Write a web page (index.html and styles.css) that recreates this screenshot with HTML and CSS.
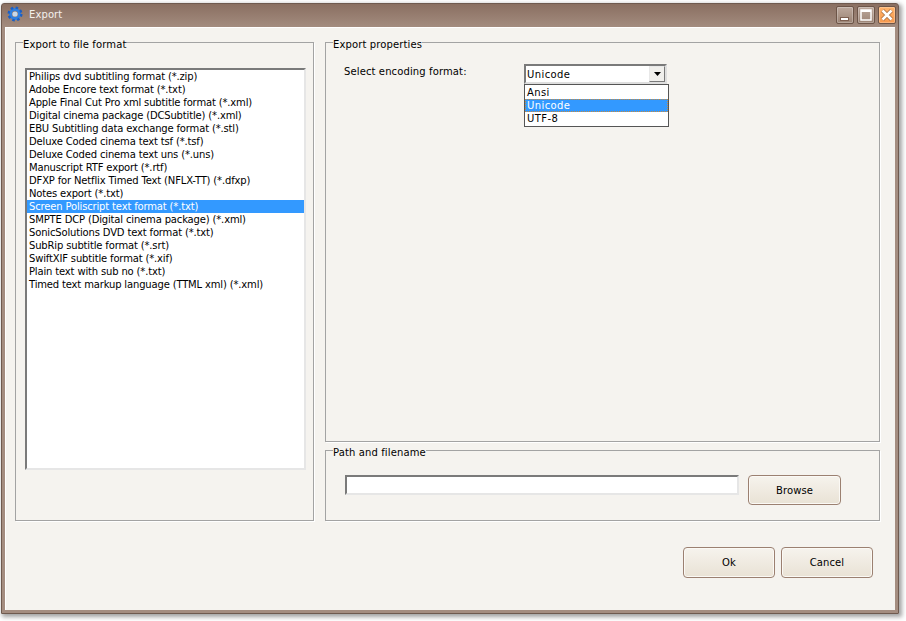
FILE: index.html
```html
<!DOCTYPE html>
<html lang="en">
<head>
<meta charset="utf-8">
<title>Export</title>
<link rel="stylesheet" href="styles.css">
</head>
<body>
<div class="window">
  <header class="titlebar">
    <svg class="app-icon" viewBox="0 0 16 16" width="16" height="16">
      <circle cx="8" cy="8" r="4.6" fill="none" stroke="#2f7fe0" stroke-width="3"/>
      <circle cx="8" cy="8" r="6.4" fill="none" stroke="#1b5fc4" stroke-width="2.2" stroke-dasharray="2.6 2.4"/>
      <circle cx="8" cy="8" r="2.6" fill="#c7d8ea"/>
    </svg>
    <span class="title">Export</span>
    <div class="caption-buttons">
      <button class="cap">
        <svg viewBox="0 0 18 18" width="18" height="18"><rect x="4.500" y="11.500" width="8" height="3" fill="#fff" stroke="#7d5f50"/></svg>
      </button>
      <button class="cap">
        <svg viewBox="0 0 18 18" width="18" height="18"><rect x="4" y="4" width="10" height="10" fill="none" stroke="#fff" stroke-width="1.500"/><rect x="4" y="4" width="10" height="2" fill="#fff"/></svg>
      </button>
      <button class="cap cap-close">
        <svg viewBox="0 0 18 18" width="18" height="18"><path d="M4.500 4.500 13.500 13.500M13.500 4.500 4.500 13.500" fill="none" stroke="#a2673a" stroke-width="4"/><path d="M4.500 4.500 13.500 13.500M13.500 4.500 4.500 13.500" fill="none" stroke="#fff" stroke-width="2.600"/></svg>
      </button>
    </div>
  </header>
  <main class="content">
    <div class="groups">
      <fieldset class="group group-format">
        <legend>Export to file format</legend>
        <ul class="listbox">
          <li>Philips dvd subtitling format (*.zip)</li>
          <li>Adobe Encore text format (*.txt)</li>
          <li>Apple Final Cut Pro xml subtitle format (*.xml)</li>
          <li>Digital cinema package (DCSubtitle) (*.xml)</li>
          <li>EBU Subtitling data exchange format (*.stl)</li>
          <li>Deluxe Coded cinema text tsf (*.tsf)</li>
          <li>Deluxe Coded cinema text uns (*.uns)</li>
          <li>Manuscript RTF export (*.rtf)</li>
          <li>DFXP for Netflix Timed Text (NFLX-TT) (*.dfxp)</li>
          <li>Notes export (*.txt)</li>
          <li class="selected">Screen Poliscript text format (*.txt)</li>
          <li>SMPTE DCP (Digital cinema package) (*.xml)</li>
          <li>SonicSolutions DVD text format (*.txt)</li>
          <li>SubRip subtitle format (*.srt)</li>
          <li>SwiftXIF subtitle format (*.xif)</li>
          <li>Plain text with sub no (*.txt)</li>
          <li>Timed text markup language (TTML xml) (*.xml)</li>
        </ul>
      </fieldset>
      <fieldset class="group group-props">
        <legend>Export properties</legend>
        <div class="encoding-row">
          <span class="encoding-label">Select encoding format:</span>
          <div class="combo">
            <div class="combo-field">
              <span>Unicode</span>
              <span class="combo-arrow"><svg viewBox="0 0 7 4" width="7" height="4"><path d="M0 0h7L3.500 4z" fill="#000"/></svg></span>
            </div>
            <ul class="combo-popup">
              <li>Ansi</li>
              <li class="selected focused">Unicode</li>
              <li>UTF-8</li>
            </ul>
          </div>
        </div>
      </fieldset>
      <fieldset class="group group-path">
        <legend>Path and filename</legend>
        <div class="path-row">
          <div class="path-input"></div>
          <button class="btn btn-browse">Browse</button>
        </div>
      </fieldset>
    </div>
    <footer class="actions">
      <button class="btn btn-action">Ok</button>
      <button class="btn btn-action">Cancel</button>
    </footer>
  </main>
</div>
</body>
</html>
```
FILE: styles.css
```css
* { box-sizing: border-box; }
html, body { margin: 0; padding: 0; }
body {
  width: 906px;
  height: 621px;
  background: #fff;
  font-family: "DejaVu Sans", "Open Sans", sans-serif;
  font-size: 10px;
  letter-spacing: -0.16px;
  color: #000;
  overflow: hidden;
}
.window {
  margin: 3px 0 0 1px;
  width: 898px;
  height: 611px;
  display: flex;
  flex-direction: column;
  background: linear-gradient(180deg, #8a6f61 0, #a48d80 24px, #a48d80 100%);
  border: 1px solid #6f5a4f;
  border-radius: 3px 3px 0 0;
  box-shadow: 2px 2px 4px 1px rgba(90, 90, 90, .55);
}
.titlebar {
  height: 23px;
  flex: none;
  display: flex;
  align-items: center;
  padding: 0 2px 3px 5px;
}
.app-icon { flex: none; margin-right: 6px; }
.title { color: #f4f0ec; letter-spacing: 0.1px; }
.caption-buttons { margin-left: auto; margin-top: 2px; display: flex; gap: 3px; }
.cap {
  width: 18px;
  height: 18px;
  padding: 0;
  display: block;
  border: 1px solid #6d5548;
  border-radius: 2px;
  background: linear-gradient(180deg, #bda99d, #9b8374);
  box-shadow: inset 0 0 0 1px rgba(255, 255, 255, .25);
}
.cap svg { display: block; margin: -1px; }
.cap-close { background: linear-gradient(180deg, #ffb36b, #f79a4e); }
.content {
  flex: 1;
  margin: 0 3px 3px;
  background: #f5f3ef;
  border: 1px solid #fff;
  border-width: 1px 0 0 1px;
  display: flex;
  flex-direction: column;
  padding: 6px 13px 0 9px;
}
.groups {
  display: grid;
  grid-template-columns: 299px 555px;
  grid-template-rows: 408px 79px;
  column-gap: 11px;
}
.group {
  margin: 0;
  padding: 0;
  min-width: 0;
  border: 1px solid #a3a3a3;
  box-shadow: 1px 1px 0 #fff;
}
.group legend {
  margin-left: 7px;
  padding: 4px 0 0;
  line-height: 13px;
  letter-spacing: 0.12px;
}
.group-format { grid-row: 1 / span 2; }
.listbox {
  list-style: none;
  margin: 17px 7px 0 9px;
  padding: 0;
  height: 402px;
  background: #fff;
  border: 2px solid;
  border-color: #7a7a7a #e6e6e6 #e6e6e6 #7a7a7a;
  line-height: 13px;
}
.listbox li { padding-left: 2px; height: 13px; white-space: nowrap; }
.selected { background: #3399ff; color: #fff; }
.focused { outline: 1px dotted #c98a3c; outline-offset: -1px; }
.encoding-row { display: flex; align-items: flex-start; margin: 13px 0 0 18px; }
.encoding-label { width: 180px; margin-top: 1px; line-height: 13px; letter-spacing: 0.12px; }
.combo { position: relative; width: 143px; height: 20px; letter-spacing: 0.4px; }
.combo-field {
  height: 20px;
  background: #fff;
  border: 2px solid;
  border-color: #7a7a7a #dedede #dedede #7a7a7a;
  display: flex;
  align-items: center;
  justify-content: space-between;
  padding-left: 1px;
}
.combo-arrow {
  width: 16px;
  height: 16px;
  background: #f0efec;
  border: 1px solid;
  border-color: #e8e8e8 #7a7a7a #7a7a7a #e8e8e8;
  display: flex;
  align-items: center;
  justify-content: center;
}
.combo-arrow svg { display: block; }
.combo-popup {
  position: absolute;
  left: 0;
  top: 20px;
  width: 145px;
  margin: 0;
  padding: 1px 0;
  list-style: none;
  background: #fff;
  border: 1px solid #555;
  line-height: 13px;
  z-index: 2;
}
.combo-popup li { height: 13px; padding-left: 2px; }
.path-row { display: flex; align-items: flex-start; gap: 9px; margin: 16px 0 0 19px; }
.path-input {
  width: 394px;
  height: 20px;
  background: #fff;
  border: 2px solid;
  border-color: #7a7a7a #e6e6e6 #e6e6e6 #7a7a7a;
}
.btn {
  font: inherit;
  letter-spacing: 0.1px;
  color: #000;
  padding: 0;
  border: 1px solid #9b8071;
  border-radius: 4px;
  background: linear-gradient(180deg, #f6f3ed 0, #e9e2d5 100%);
  box-shadow: inset 0 0 0 1px #fbf9f5;
}
.btn-browse { width: 93px; height: 30px; }
.actions {
  display: flex;
  justify-content: flex-end;
  gap: 6px;
  margin-top: 26px;
  margin-right: 9px;
}
.btn-action { width: 92px; height: 31px; }
```
